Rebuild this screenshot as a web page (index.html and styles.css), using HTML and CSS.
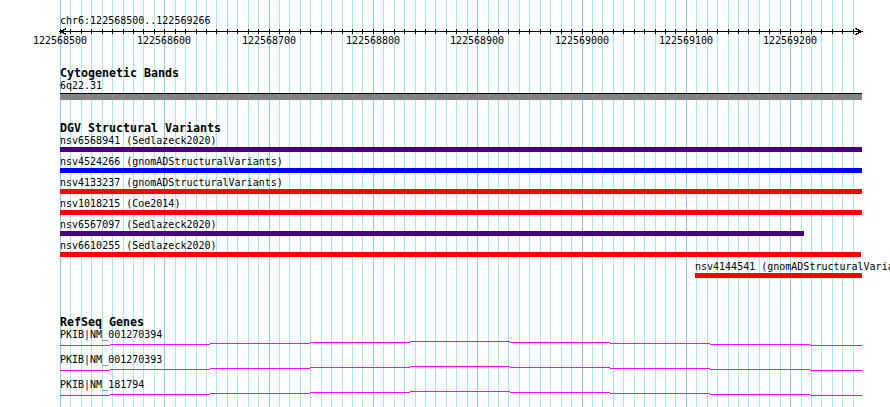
FILE: index.html
```html
<!DOCTYPE html>
<html lang="en">
<head>
  <meta charset="UTF-8">
  <meta name="viewport" content="width=device-width, initial-scale=1.0">
  <title>chr6:122568500..122569266</title>
  <link rel="stylesheet" href="styles.css">
</head>
<body>
  <div class="browser">
    <!-- grid: a line every 10 bp, a darker one every 100 bp -->
    <svg class="grid" width="890" height="407">
      <path class="grid-minor" d="M70.5 0V407M81.5 0V407M91.5 0V407M102.5 0V407M112.5 0V407M123.5 0V407M133.5 0V407M143.5 0V407M154.5 0V407M175.5 0V407M185.5 0V407M196.5 0V407M206.5 0V407M216.5 0V407M227.5 0V407M237.5 0V407M248.5 0V407M258.5 0V407M279.5 0V407M289.5 0V407M300.5 0V407M310.5 0V407M321.5 0V407M331.5 0V407M342.5 0V407M352.5 0V407M362.5 0V407M383.5 0V407M394.5 0V407M404.5 0V407M415.5 0V407M425.5 0V407M435.5 0V407M446.5 0V407M456.5 0V407M467.5 0V407M488.5 0V407M498.5 0V407M508.5 0V407M519.5 0V407M529.5 0V407M540.5 0V407M550.5 0V407M561.5 0V407M571.5 0V407M592.5 0V407M602.5 0V407M613.5 0V407M623.5 0V407M634.5 0V407M644.5 0V407M655.5 0V407M665.5 0V407M675.5 0V407M696.5 0V407M707.5 0V407M717.5 0V407M728.5 0V407M738.5 0V407M748.5 0V407M759.5 0V407M769.5 0V407M780.5 0V407M801.5 0V407M811.5 0V407M821.5 0V407M832.5 0V407M842.5 0V407M853.5 0V407"/>
      <path class="grid-major" d="M60.5 0V407M164.5 0V407M269.5 0V407M373.5 0V407M477.5 0V407M582.5 0V407M686.5 0V407M790.5 0V407"/>
    </svg>

    <div class="ruler">
      <div class="locus">chr6:122568500..122569266</div>
      <svg class="axis" width="890" height="22">
        <path d="M60 5.5H862"/>
        <path d="M60.5 3V8M70.5 3V8M81.5 3V8M91.5 3V8M102.5 3V8M112.5 3V8M123.5 3V8M133.5 3V8M143.5 3V8M154.5 3V8M164.5 3V8M175.5 3V8M185.5 3V8M196.5 3V8M206.5 3V8M216.5 3V8M227.5 3V8M237.5 3V8M248.5 3V8M258.5 3V8M269.5 3V8M279.5 3V8M289.5 3V8M300.5 3V8M310.5 3V8M321.5 3V8M331.5 3V8M342.5 3V8M352.5 3V8M362.5 3V8M373.5 3V8M383.5 3V8M394.5 3V8M404.5 3V8M415.5 3V8M425.5 3V8M435.5 3V8M446.5 3V8M456.5 3V8M467.5 3V8M477.5 3V8M488.5 3V8M498.5 3V8M508.5 3V8M519.5 3V8M529.5 3V8M540.5 3V8M550.5 3V8M561.5 3V8M571.5 3V8M582.5 3V8M592.5 3V8M602.5 3V8M613.5 3V8M623.5 3V8M634.5 3V8M644.5 3V8M655.5 3V8M665.5 3V8M675.5 3V8M686.5 3V8M696.5 3V8M707.5 3V8M717.5 3V8M728.5 3V8M738.5 3V8M748.5 3V8M759.5 3V8M769.5 3V8M780.5 3V8M790.5 3V8M801.5 3V8M811.5 3V8M821.5 3V8M832.5 3V8M842.5 3V8M853.5 3V8"/>
        <polyline points="66.5,2.5 60.5,5.5 66.5,8.5"/>
        <polyline points="855.5,2.5 861.5,5.5 855.5,8.5"/>
        <text x="60" y="18">122568500</text>
        <text x="164" y="18">122568600</text>
        <text x="269" y="18">122568700</text>
        <text x="373" y="18">122568800</text>
        <text x="477" y="18">122568900</text>
        <text x="582" y="18">122569000</text>
        <text x="686" y="18">122569100</text>
        <text x="790" y="18">122569200</text>
      </svg>
    </div>

    <section class="track cyto">
      <h2 class="track-title">Cytogenetic Bands</h2>
      <div class="feature">
        <div class="label">6q22.31</div>
        <div class="band"></div>
      </div>
    </section>

    <section class="track dgv">
      <h2 class="track-title">DGV Structural Variants</h2>
      <div class="feature">
        <div class="label">nsv6568941 (Sedlazeck2020)</div>
        <div class="bar indigo" style="width: 802px"></div>
      </div>
      <div class="feature">
        <div class="label">nsv4524266 (gnomADStructuralVariants)</div>
        <div class="bar blue" style="width: 802px"></div>
      </div>
      <div class="feature">
        <div class="label">nsv4133237 (gnomADStructuralVariants)</div>
        <div class="bar red" style="width: 802px"></div>
      </div>
      <div class="feature">
        <div class="label">nsv1018215 (Coe2014)</div>
        <div class="bar red" style="width: 802px"></div>
      </div>
      <div class="feature">
        <div class="label">nsv6567097 (Sedlazeck2020)</div>
        <div class="bar indigo" style="width: 744px"></div>
      </div>
      <div class="feature">
        <div class="label">nsv6610255 (Sedlazeck2020)</div>
        <div class="bar red" style="width: 801px"></div>
      </div>
      <div class="feature" style="margin-left: 635px">
        <div class="label">nsv4144541 (gnomADStructuralVariants)</div>
        <div class="bar red" style="width: 167px"></div>
      </div>
    </section>

    <section class="track genes">
      <h2 class="track-title">RefSeq Genes</h2>
      <div class="feature">
        <div class="label">PKIB|NM_001270394</div>
        <svg class="transcript" width="802" height="5"><path d="M0 4.5H50M50 3.5H150M150 2.5H250M250 1.5H350M350 .5H450M450 1.5H550M550 2.5H650M650 3.5H750M750 4.5H802"/></svg>
      </div>
      <div class="feature">
        <div class="label">PKIB|NM_001270393</div>
        <svg class="transcript" width="802" height="5"><path d="M0 4.5H50M50 3.5H150M150 2.5H250M250 1.5H350M350 .5H450M450 1.5H550M550 2.5H650M650 3.5H750M750 4.5H802"/></svg>
      </div>
      <div class="feature">
        <div class="label">PKIB|NM_181794</div>
        <svg class="transcript" width="802" height="5"><path d="M0 4.5H50M50 3.5H150M150 2.5H250M250 1.5H350M350 .5H450M450 1.5H550M550 2.5H650M650 3.5H750M750 4.5H802"/></svg>
      </div>
    </section>
  </div>
</body>
</html>
```

FILE: styles.css
```css
body {
  margin: 0;
  background-color: #fdfefd;
  font-family: "DejaVu Sans Mono", monospace;
  font-size: 10px;
  color: #000;
}

.browser {
  position: relative;
  width: 890px;
  height: 407px;
  overflow: hidden;
}

/* grid sits behind the tracks */
.grid {
  position: absolute;
  top: 0;
  left: 0;
}

.grid path {
  fill: none;
  stroke-width: 1;
  shape-rendering: crispEdges;
}

.grid-minor {
  stroke: #a6e8ea;
}

.grid-major {
  stroke: #88c7ea;
}

.ruler,
.track {
  position: relative;
}

.locus {
  margin-left: 60px;
  padding-top: 16px;
  line-height: 10px;
}

.axis {
  display: block;
}

.axis path,
.axis polyline {
  fill: none;
  stroke: #000;
  stroke-width: 1;
  shape-rendering: crispEdges;
}

.axis text {
  font-family: "DejaVu Sans Mono", monospace;
  font-size: 10px;
  text-anchor: middle;
  fill: #000;
}

/* tracks */
.track {
  padding-left: 60px;
}

.track-title {
  margin: 0 0 2px;
  font-size: 11.63px;
  line-height: 12px;
  font-weight: bold;
  white-space: nowrap;
}

.label {
  line-height: 10px;
  white-space: nowrap;
}

.cyto {
  margin-top: 19px;
}

.band {
  width: 802px;
  height: 6px;
  margin-top: 2px;
  border-top: 1px solid #000;
  background-color: #858385;
}

.dgv {
  margin-top: 22px;
}

.bar {
  height: 5px;
  margin: 1px 0 5px;
}

.indigo {
  background-color: #4b0082;
}

.blue {
  background-color: #0000ff;
}

.red {
  background-color: #ff0000;
}

/* the last bar's bottom margin collapses into this one */
.genes {
  margin-top: 38px;
}

.transcript {
  display: block;
  margin: 1px 0 9px;
}

.transcript path {
  fill: none;
  stroke: #ff00ff;
  stroke-width: 1;
  shape-rendering: crispEdges;
}
```
